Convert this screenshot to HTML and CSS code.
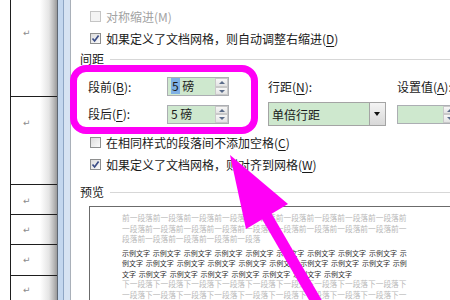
FILE: index.html
```html
<!DOCTYPE html>
<html lang="zh-CN">
<head>
  <meta charset="UTF-8" />
  <meta name="viewport" content="width=device-width, initial-scale=1" />
  <title>段落</title>
  <link rel="stylesheet" href="styles.css">
</head>
<body>
  <div class="screen">
    <div class="doc">
      <div class="doc-table">
        <div class="doc-row r0"><span class="mark">↵</span></div>
        <div class="doc-row r1"><span class="mark">↵</span></div>
        <div class="doc-row r2"><span class="mark">↵</span></div>
        <div class="doc-row r3"><span class="mark">↵</span></div>
        <div class="doc-row r4"><span class="mark">↵</span></div>
        <div class="doc-row r5"><span class="mark">↵</span></div>
      </div>
    </div>
    <div class="frame"></div>

    <div class="dialog">
      <div class="check-row disabled">
        <span class="box"></span>
        <span>对称缩进(M)</span>
      </div>
      <div class="check-row">
        <span class="box"><svg width="9" height="9" viewBox="0 0 9 9"><path d="M1.5 4.5 L3.6 7 L7.6 1.6" /></svg></span>
        <span>如果定义了文档网格，则自动调整右缩进(<u>D</u>)</span>
      </div>

      <div class="group-title"><span>间距</span></div>

      <div class="spacing">
        <div class="label">段前(<u>B</u>):</div>
        <div class="spin">
          <div class="spin-field"><span class="sel">5</span> 磅</div>
          <div class="spin-btns"><span class="up"></span><span class="down"></span></div>
        </div>
        <div class="label">行距(<u>N</u>):</div>
        <div class="label">设置值(<u>A</u>):</div>

        <div class="label">段后(<u>F</u>):</div>
        <div class="spin">
          <div class="spin-field">5 磅</div>
          <div class="spin-btns"><span class="up"></span><span class="down"></span></div>
        </div>
        <div class="combo">
          <span class="combo-text">单倍行距</span>
          <span class="combo-btn"></span>
        </div>
        <div class="spin wide">
          <div class="spin-field"></div>
          <div class="spin-btns"><span class="up"></span><span class="down"></span></div>
        </div>
      </div>

      <div class="check-row after-spacing">
        <span class="box"></span>
        <span>在相同样式的段落间不添加空格(<u>C</u>)</span>
      </div>
      <div class="check-row">
        <span class="box"><svg width="9" height="9" viewBox="0 0 9 9"><path d="M1.5 4.5 L3.6 7 L7.6 1.6" /></svg></span>
        <span>如果定义了文档网格，则对齐到网格(<u>W</u>)</span>
      </div>

      <div class="group-title preview-title"><span>预览</span></div>

      <div class="preview">
        <div class="para prev">
          <div>前一段落前一段落前一段落前一段落前一段落前一段落前一段落前一段落前一段落前</div>
          <div>一段落前一段落前一段落前一段落前一段落前一段落前一段落前一段落前一段落前一</div>
          <div>段落前一段落前一段落前一段落前一段落</div>
        </div>
        <div class="para sample">
          <div>示例文字 示例文字 示例文字 示例文字 示例文字 示例文字 示例文字 示例文字 示例文字 示</div>
          <div>例文字 示例文字 示例文字 示例文字 示例文字 示例文字 示例文字 示例文字 示例文字 示例</div>
          <div>文字 示例文字 示例文字 示例文字 示例文字 示例文字 示例文字 示例文字</div>
        </div>
        <div class="para prev">
          <div>下一段落下一段落下一段落下一段落下一段落下一段落下一段落下一段落下一段落下</div>
          <div>一段落下一段落下一段落下一段落下一段落下一段落下一段落下一段落下一段落下一</div>
        </div>
      </div>
    </div>

    <!-- annotation drawn over the dialog -->
    <div class="highlight"></div>
    <svg class="arrow" width="450" height="300" viewBox="0 0 450 300">
      <line x1="262" y1="208" x2="320" y2="308" />
      <polygon points="230,155 246,229 288,204" />
    </svg>
  </div>
</body>
</html>
```

FILE: styles.css
```css
* {
  box-sizing: border-box;
}
body {
  margin: 0;
  background: #fff;
  font-family: "Noto Sans CJK SC", "Liberation Sans", sans-serif;
  font-size: 12px;
  color: #1a1a1a;
}
.screen {
  position: relative;
  width: 450px;
  height: 300px;
  overflow: hidden;
  display: flex;
}

/* document behind the dialog */
.doc {
  width: 57px;
  flex-shrink: 0;
  background: linear-gradient(to right, #fff 0, #fff 40px, #e4e4e4 49px, #b8b8b8 54px, #9a9a9a 57px);
}
.doc-table {
  margin-left: 10px;
  height: 100%;
  border-left: 1px solid #1e1e1e;
  display: flex;
  flex-direction: column;
}
.doc-row {
  flex-shrink: 0;
  border-bottom: 1px solid #1e1e1e;
  padding-left: 12px;
  font-family: "DejaVu Sans", sans-serif;
  font-size: 9px;
  line-height: 12px;
  color: #8c8c8c;
}
.doc-row.r0 { height: 97px; padding-top: 27px; }
.doc-row.r1 { height: 88px; padding-top: 20px; }
.doc-row.r2 { height: 30px; padding-top: 10px; }
.doc-row.r3 { height: 30px; padding-top: 9px; }
.doc-row.r4 { height: 31px; padding-top: 9px; }
.doc-row.r5 { flex: 1; border-bottom: none; padding-top: 8px; }

.frame {
  width: 15px;
  flex-shrink: 0;
  background: linear-gradient(to right,
    #5f6873 0, #5f6873 1px,
    #c3d7ee 1px, #c3d7ee 6px,
    #8ea6c4 6px, #8ea6c4 7px,
    #d6e3f2 7px, #d6e3f2 13px,
    #a9b0b9 13px, #a9b0b9 14px,
    #fff 14px);
}

/* dialog body */
.dialog {
  flex: 1;
  min-width: 0;
  padding-top: 5px;
  background: #fff;
}
.check-row {
  height: 22px;
  display: flex;
  align-items: center;
  gap: 5px;
  padding-left: 18px;
  white-space: nowrap;
}
.check-row.disabled {
  color: #a3a3a3;
}
.check-row.after-spacing {
  margin-top: 5px;
}
.box {
  width: 11px;
  height: 11px;
  flex-shrink: 0;
  display: flex;
  align-items: center;
  justify-content: center;
  border: 1px solid #8e8f8f;
  background: linear-gradient(135deg, #dcdcdc, #fbfbfb);
}
.disabled .box {
  border-color: #c5c5c5;
  background: #f4f4f4;
}
.box svg path {
  fill: none;
  stroke: #3b4d86;
  stroke-width: 1.7;
}
u {
  text-decoration-thickness: 1px;
  text-underline-offset: 2px;
}

.group-title {
  height: 16px;
  margin-top: 1px;
  display: flex;
  align-items: center;
  gap: 6px;
  padding-left: 8px;
}
.group-title::after {
  content: "";
  flex: 1;
  height: 1px;
  margin-top: 2px;
  background: #d7d7d7;
}
.preview-title {
  margin-top: 8px;
}

.spacing {
  margin-top: 11px;
  padding-left: 16px;
  display: grid;
  grid-template-columns: 79px 101px 129px 60px;
  grid-template-rows: 19px 24px;
  row-gap: 6px;
  align-items: center;
  white-space: nowrap;
}
.label {
  line-height: 16px;
}

.spin {
  width: 62px;
  height: 19px;
  display: flex;
  border: 1px solid #acaeb3;
  background: #cee8ce;
}
.spin.wide {
  width: 60px;
}
.spin-field {
  flex: 1;
  padding-left: 3px;
  line-height: 16px;
}
.sel {
  display: inline-block;
  padding: 0 1px;
  background: #7fb0e4;
}
.spin-btns {
  width: 13px;
  display: flex;
  flex-direction: column;
  background: #fff;
}
.spin-btns span {
  position: relative;
  flex: 1;
  border: 1px solid #c9c9c9;
  background: linear-gradient(#f7f7f7, #e3e3e3);
}
.spin-btns span::after {
  content: "";
  position: absolute;
  left: 3px;
  top: 2px;
  border-left: 3px solid transparent;
  border-right: 3px solid transparent;
}
.spin-btns .up::after {
  border-bottom: 3px solid #5b6c8a;
}
.spin-btns .down::after {
  border-top: 3px solid #5b6c8a;
}

.combo {
  width: 118px;
  height: 24px;
  display: flex;
  align-items: center;
  border: 1px solid #a4a4a4;
  background: #cee8ce;
}
.combo-text {
  flex: 1;
  padding-left: 3px;
}
.combo-btn {
  position: relative;
  width: 16px;
  height: 100%;
  border-left: 1px solid #a4a4a4;
  background: linear-gradient(#f4f4f4, #d8d8d8);
}
.combo-btn::after {
  content: "";
  position: absolute;
  left: 4px;
  top: 9px;
  border-left: 3.5px solid transparent;
  border-right: 3.5px solid transparent;
  border-top: 4px solid #111;
}

.preview {
  margin-top: 7px;
  margin-left: 17px;
  height: 100px;
  padding: 6px 0 0 32px;
  border-top: 1px solid #6b6b6b;
  border-left: 1px solid #6b6b6b;
  white-space: nowrap;
}
.para {
  line-height: 10.5px;
}
.para.prev {
  font-size: 7.7px;
  color: #b9b9b9;
}
.para.sample {
  margin-top: 3px;
  font-size: 7px;
  word-spacing: 1.3px;
  color: #2e2e2e;
}

/* magenta annotation */
.highlight {
  position: absolute;
  left: 70px;
  top: 65px;
  width: 188px;
  height: 69px;
  border: 7px solid #ff00f6;
  border-radius: 16px;
}
.arrow {
  position: absolute;
  left: 0;
  top: 0;
}
.arrow line {
  stroke: #ff00f6;
  stroke-width: 11;
}
.arrow polygon {
  fill: #ff00f6;
}
```
